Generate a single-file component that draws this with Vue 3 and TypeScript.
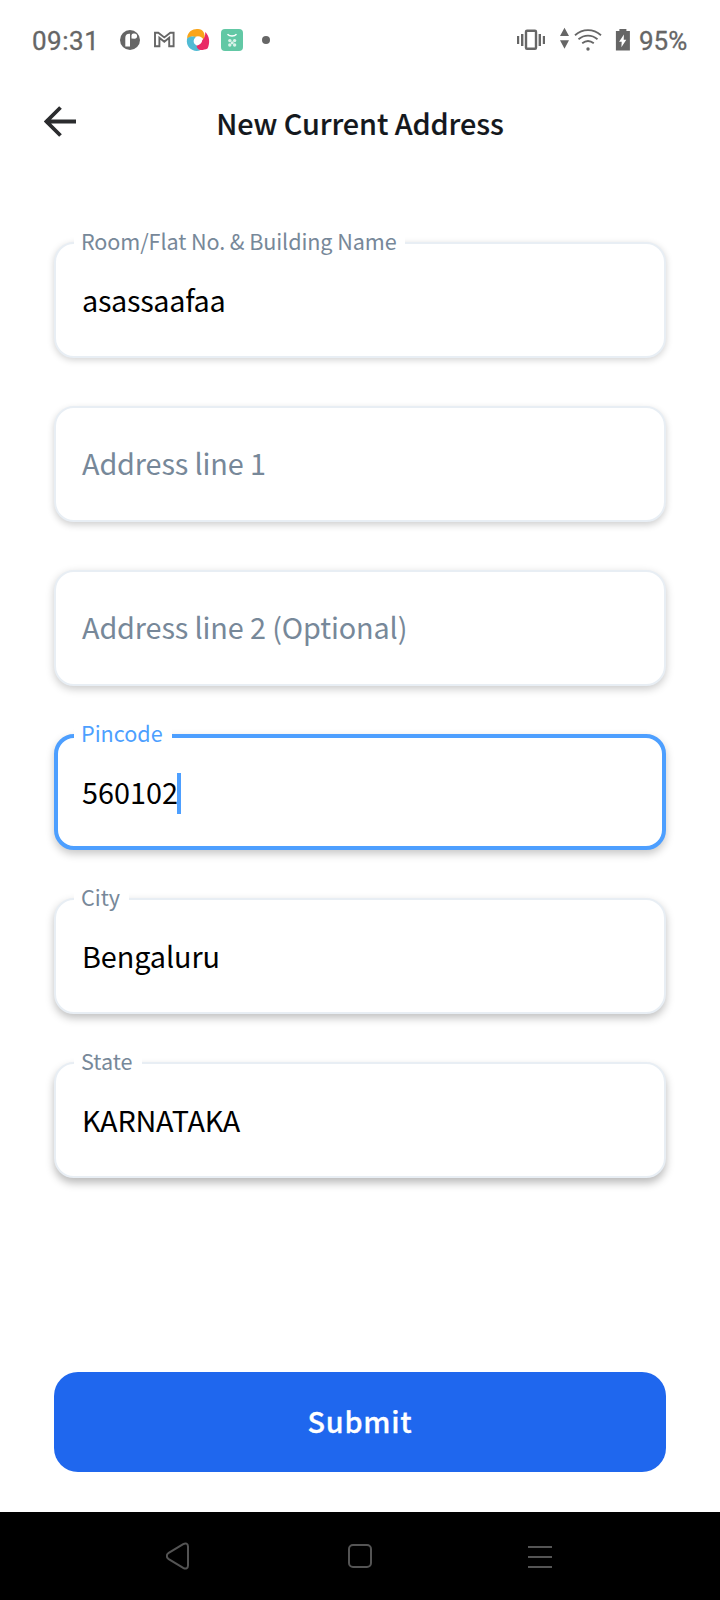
<script setup lang="ts">
interface Field {
  id: string
  label: string
  value: string
  focused?: boolean
}

const fields: Field[] = [
  { id: 'room', label: 'Room/Flat No. & Building Name', value: 'asassaafaa' },
  { id: 'line1', label: 'Address line 1', value: '' },
  { id: 'line2', label: 'Address line 2 (Optional)', value: '' },
  { id: 'pincode', label: 'Pincode', value: '560102', focused: true },
  { id: 'city', label: 'City', value: 'Bengaluru' },
  { id: 'state', label: 'State', value: 'KARNATAKA' },
]
</script>

<template>
  <div class="screen">
    <header class="status">
      <span class="clock">09:31</span>
      <svg class="notices" width="160" height="26" viewBox="0 0 160 26">
        <circle cx="10" cy="13" r="10" fill="#666" />
        <path d="M5.3 19.5V10.8a4 4 0 0 1 4-4h.7v12.7z" fill="#fff" />
        <path d="M11.5 11.6V8.5a2 2 0 0 1 2-2h1a2.6 2.6 0 0 1 0 5.2z" fill="#fff" />
        <path d="M35 19.3V5.7h3.3l6 4.7 6-4.7h3.3v13.6h-4.4v-8.6l-4.9 4-4.9-4v8.6z" fill="none" stroke="#666" stroke-width="1.9" />
        <g transform="translate(78 13)">
          <path d="M-10.8-3C-10-8.5-5-11.5 0-11 5-10.8 7.6-7 6.6 1 4.5-3.2.5-4.8-3-3-5.8-4.2-8.6-3.4-10.8-1Z" fill="#f9a51a" />
          <path d="M7.2-8C12-4 12 4 9.5 8.5 4.5 11-3 10.5-6 5.8 0 6.4 4 4 4.2.2 6.6-1.8 7.5-4.5 7.2-8Z" fill="#e92b66" />
          <path d="M-11-1.2C-9-3.6-5-3.8-2.2-3-5.4 0-4.8 3.6-1.6 5.2-1.2 8 .6 9.8 2.2 10.3-4 12.6-12.6 8.4-11-1.2Z" fill="#51bbd4" />
        </g>
        <rect x="101" y="2" width="22" height="22" rx="4" fill="#62c8a5" />
        <path d="M107.5 7.2c2.3 2.3 6.7 2.3 9 0" fill="none" stroke="#fff" stroke-width="1.5" />
        <g fill="#d9f3e9">
          <circle cx="109.8" cy="13.6" r="1.7" /><circle cx="114.6" cy="13.6" r="1.7" />
          <circle cx="109.8" cy="18" r="1.7" /><circle cx="114.6" cy="18" r="1.7" />
          <circle cx="112.2" cy="15.8" r="1.5" />
        </g>
        <circle cx="146" cy="13" r="4" fill="#666" />
      </svg>
      <svg class="signals" width="116" height="26" viewBox="0 0 116 26" fill="#666">
        <path d="M0 9h2.2v8H0zM4 7h2.4v12H4zM21.6 7H24v12h-2.4zM25.8 9H28v8h-2.2z" />
        <rect x="9" y="3.7" width="10" height="18" rx="1" fill="none" stroke="#666" stroke-width="2.4" />
        <path d="M47.5.7 52 9h-9zM47.5 21.7 52 13.2h-9z" />
        <g fill="none" stroke="#666" stroke-width="1.8">
          <path d="M58 8.2c7.8-6.8 18.2-6.8 26 0" />
          <path d="M61.5 12.3c5.7-4.8 13.3-4.8 19 0" />
          <path d="M65.2 16.3c3.5-2.8 8.1-2.8 11.6 0" />
        </g>
        <circle cx="71" cy="22" r="1.7" />
        <path transform="translate(-.6 0)" fill-rule="evenodd" d="M103 2h7v2h3.5v19.5h-14V4h3.5zM107.5 7.5l-4.8 7.2h2.6l-.3 5.5 4.9-7.4h-2.6z" />
      </svg>
      <span class="charge">95%</span>
    </header>

    <div class="bar">
      <svg class="back" width="34" height="32" viewBox="0 0 34 32" fill="none" stroke="#2b2c2e" stroke-width="3.8">
        <path d="M32 15.5H3M16.5 1.5l-14 14 14 14" />
      </svg>
      <h1 class="title">New Current Address</h1>
    </div>

    <form class="form" @submit.prevent>
      <div v-for="field in fields" :key="field.id" class="field" :class="[field.id, { focused: field.focused }]">
        <span v-if="field.value" class="label">{{ field.label }}</span>
        <span v-if="field.value" class="value">{{ field.value }}</span>
        <span v-else class="value placeholder">{{ field.label }}</span>
        <i v-if="field.focused" class="caret"></i>
      </div>
      <button class="submit" type="submit">Submit</button>
    </form>

    <nav class="nav">
      <svg class="nav-back" width="24" height="28" viewBox="0 0 24 28"><path d="M2.3 11.2 17.2 2.1c2.6-1.5 4.8-.5 4.8 2.3v19.2c0 2.8-2.2 3.8-4.8 2.3L2.3 16.8c-2-1.4-2-4.2 0-5.6Z" /></svg>
      <svg width="24" height="24" viewBox="0 0 24 24"><rect x="1" y="1" width="22" height="22" rx="4" /></svg>
      <svg class="nav-menu" width="24" height="22" viewBox="0 0 24 22"><path d="M0 1h24M0 11h24M0 21h24" /></svg>
    </nav>
  </div>
</template>

<style>
body {
  margin: 0;
  background: #fff;
}
</style>

<style scoped>
.screen {
  width: 720px;
  height: 1600px;
  display: flex;
  flex-direction: column;
  background: #fff;
  overflow: hidden;
  font-family: "Noto Sans CJK SC", "Noto Sans", sans-serif;
}
.status {
  height: 80px;
  box-sizing: border-box;
  padding: 0 30px 0 32px;
  display: flex;
  align-items: center;
  font: 400 26px/30px Roboto, sans-serif;
  color: #666;
}
.clock {
  width: 88px;
  padding-top: 2px;
  letter-spacing: 0.5px;
  -webkit-text-stroke: 0.3px currentColor;
}
.signals {
  margin-left: auto;
}
.charge {
  width: 51px;
  margin-left: 6px;
  padding-top: 2px;
  -webkit-text-stroke: 0.3px currentColor;
}
.bar {
  height: 162px;
  display: grid;
  grid-template-columns: 34px 1fr 34px;
  align-items: start;
  padding: 0 44px;
}
.back {
  margin-top: 26px;
}
.title {
  margin: 23px 0 0;
  font-size: 28.8px;
  line-height: 40px;
  font-weight: 500;
  letter-spacing: -0.08px;
  -webkit-text-stroke: 0.15px currentColor;
  text-align: center;
  color: #14181d;
}
.form {
  height: 1270px;
  padding: 0 54px;
  display: flex;
  flex-direction: column;
  gap: 48px;
}
.field {
  position: relative;
  flex: none;
  height: 116px;
  box-sizing: border-box;
  border: 2px solid #e8eef4;
  border-radius: 20px;
  background: #fff;
  padding-left: 26px;
  display: flex;
  align-items: center;
  box-shadow: 0 2px 7px rgba(0, 0, 0, 0.18);
}
.line1 { box-shadow: 0 3px 7px rgba(0, 0, 0, 0.19); }
.line2 { box-shadow: 0 3px 8px rgba(0, 0, 0, 0.21); }
.pincode { box-shadow: 0 4px 8px rgba(0, 0, 0, 0.22); }
.city { box-shadow: 0 4px 9px rgba(0, 0, 0, 0.25); }
.state { box-shadow: 0 5px 9px rgba(0, 0, 0, 0.27); }
.field.focused {
  border: 4px solid #4d9fff;
  padding-left: 24px;
}
.label {
  position: absolute;
  left: 18px;
  top: -17px;
  padding: 0 8px 0 7px;
  font-size: 21.6px;
  line-height: 28px;
  letter-spacing: -0.1px;
  white-space: nowrap;
  color: #778899;
  background: #fff;
}
.pincode .label,
.city .label,
.state .label {
  padding-right: 9px;
  letter-spacing: 0;
}
.focused .label {
  left: 16px;
  top: -19px;
  color: #4d9fff;
}
.value {
  font-size: 28.8px;
  line-height: 40px;
  white-space: nowrap;
  color: #000;
}
.room .value { letter-spacing: -0.3px; }
.city .value { letter-spacing: -0.08px; }
.state .value { letter-spacing: -0.2px; }
.value.placeholder {
  padding-bottom: 2px;
  letter-spacing: -0.12px;
  color: #778899;
}
.caret {
  width: 4px;
  height: 41px;
  margin: 2px 0 0 -1px;
  background: #4d9fff;
}
.submit {
  height: 100px;
  flex: none;
  margin: 146px 0 0;
  padding: 0 0 2px;
  border: 0;
  border-radius: 24px;
  background: #1f67ee;
  color: #fff;
  font: 500 28.8px/40px "Noto Sans CJK SC", sans-serif;
  letter-spacing: 0.8px;
  -webkit-text-stroke: 0.3px currentColor;
}
.nav {
  height: 88px;
  display: grid;
  grid-template-columns: repeat(3, 180px);
  justify-content: center;
  align-items: center;
  justify-items: center;
  background: #000;
}
.nav svg {
  fill: none;
  stroke: #545454;
  stroke-width: 2;
}
.nav-back {
  margin-right: 4px;
}
.nav-menu {
  margin-top: 2px;
}
</style>
